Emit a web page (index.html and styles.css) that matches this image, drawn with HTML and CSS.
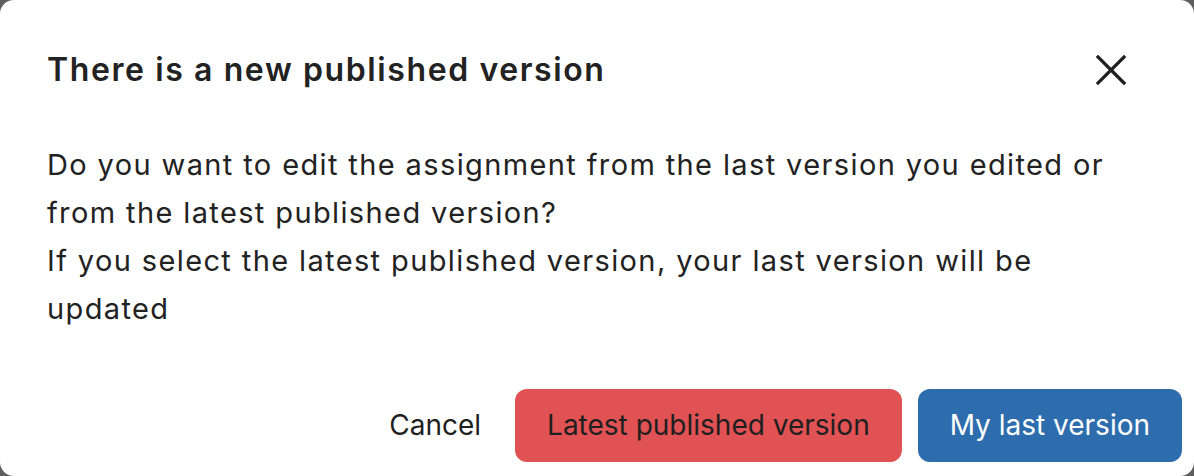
FILE: index.html
```html
<!DOCTYPE html>
<html lang="en">
<head>
<meta charset="utf-8">
<title>New published version</title>
<link rel="stylesheet" href="styles.css">
</head>
<body>
<div class="modal">
  <div class="modal-header">
    <h2 class="modal-title">There is a new published version</h2>
    <button class="close-btn" aria-label="Close">
      <svg width="40" height="40" viewBox="0 0 40 40"><path d="M7 7 L33 33 M33 7 L7 33" stroke="#1f1f1f" stroke-width="3.2" stroke-linecap="square" fill="none"/></svg>
    </button>
  </div>
  <div class="modal-body">
    <p>Do you want to edit the assignment from the last version you edited or from the latest published version?<br>If you select the latest published version, your last version will be updated</p>
  </div>
  <div class="modal-footer">
    <button class="btn btn-link">Cancel</button>
    <button class="btn btn-danger">Latest published version</button>
    <button class="btn btn-primary">My last version</button>
  </div>
</div>
</body>
</html>
```
FILE: styles.css
```css
html, body {
  margin: 0;
  padding: 0;
  background: #5e5e5e;
}
body {
  width: 1194px;
  height: 476px;
  overflow: hidden;
  font-family: Inter, "Noto Sans", sans-serif;
  color: #222222;
}
.modal {
  width: 1194px;
  height: 476px;
  background: #ffffff;
  border-radius: 14px;
  display: flex;
  flex-direction: column;
  box-sizing: border-box;
}
.modal-header {
  display: flex;
  align-items: center;
  justify-content: space-between;
  padding: 44px 63px 0 47px;
}
.modal-title {
  margin: 0;
  font-size: 32px;
  line-height: 52px;
  font-weight: 600;
  letter-spacing: 1.6px;
  color: #222222;
}
.close-btn {
  width: 40px;
  height: 40px;
  padding: 0;
  border: 0;
  background: transparent;
  display: flex;
}
.modal-body {
  padding: 0 47px;
  margin-top: 45px;
}
.modal-body p {
  margin: 0;
  font-size: 29px;
  line-height: 48px;
  letter-spacing: 1.38px;
  color: #222222;
}
.modal-footer {
  display: flex;
  justify-content: flex-end;
  gap: 16px;
  padding: 56px 12px 0 0;
}
.btn {
  font-family: Inter, "Noto Sans", sans-serif;
  font-size: 28px;
  line-height: 33px;
  padding: 20px 32px;
  border: 0;
  border-radius: 12px;
  background: transparent;
  color: #1f1f1f;
}
.btn-link {
  padding: 20px 18px;
}
.btn-danger {
  background: #e05253;
  color: #1f1f1f;
}
.btn-primary {
  background: #2e6dad;
  color: #ffffff;
}
```
